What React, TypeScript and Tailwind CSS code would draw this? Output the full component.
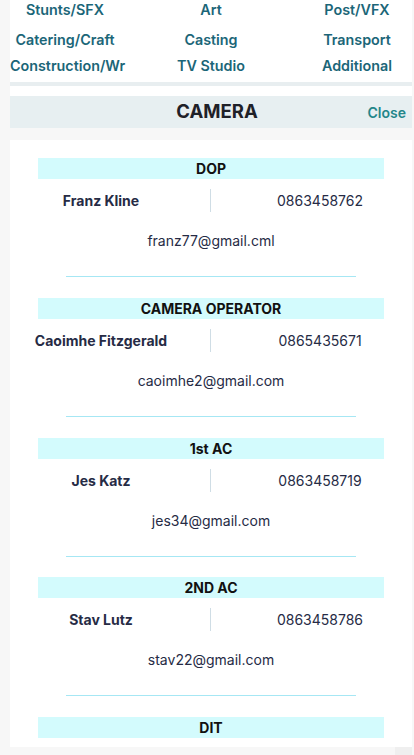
import React from "react";

const nav = [
  ["Stunts/SFX", "Art", "Post/VFX"],
  ["Catering/Craft", "Casting", "Transport"],
  ["Construction/Wr", "TV Studio", "Additional"],
];

const crew = [
  { role: "DOP", name: "Franz Kline", phone: "0863458762", email: "franz77@gmail.cml" },
  { role: "CAMERA OPERATOR", name: "Caoimhe Fitzgerald", phone: "0865435671", email: "caoimhe2@gmail.com" },
  { role: "1st AC", name: "Jes Katz", phone: "0863458719", email: "jes34@gmail.com" },
  { role: "2ND AC", name: "Stav Lutz", phone: "0863458786", email: "stav22@gmail.com" },
  { role: "DIT", name: "", phone: "", email: "" },
];

export default function App() {
  return (
    <div
      className="h-[755px] w-[414px] overflow-hidden bg-[#f7f7f7] pl-[10px] pr-[2px]"
      style={{ fontFamily: "Inter, 'Noto Sans', sans-serif" }}
    >
      {/* nav panel */}
      <div className="bg-white">
        <div className="border-b-4 border-[#e8eef0] pb-[7px]">
          {nav.map((row, i) => (
            <div
              key={i}
              className={`grid grid-cols-[110px_182px_110px] text-[14.3px] font-semibold leading-[18px] text-[#1b6678] ${
                i === 0 ? "pt-[1px]" : i === 1 ? "mt-[12px]" : "mt-[8px]"
              }`}
            >
              {row.map((t) => (
                <div key={t} className="whitespace-nowrap text-center">
                  {t}
                </div>
              ))}
            </div>
          ))}
        </div>
        <div className="h-[10px]" />
      </div>

      {/* header */}
      <div className="relative flex h-[32px] items-center justify-center bg-[#e7eff1]">
        <div className="ml-[12px] text-[18.5px] font-bold text-[#1f2128]">CAMERA</div>
        <div className="absolute right-[6px] top-1/2 -translate-y-1/2 text-[14px] font-semibold text-[#23868a]">
          Close
        </div>
      </div>

      <div className="h-[12px]" />

      {/* crew list */}
      <div className="h-[607px] bg-white px-[28px] pt-[18px]">
        {crew.map((c) => (
          <div key={c.role}>
            <div className="flex h-[21px] items-center justify-center bg-[#d3fbfd] text-[14px] font-bold text-[#111]">
              {c.role}
            </div>
            {c.name && (
              <>
                <div className="mt-[10px] flex h-[23px] items-center justify-between">
                  <div className="flex w-[126px] justify-center">
                    <span className="whitespace-nowrap text-[14px] font-bold text-[#262b45]">{c.name}</span>
                  </div>
                  <div className="h-[23px] w-px bg-[#cfdde5]" />
                  <div className="w-[128px] text-center text-[14px] text-[#262b45]">{c.phone}</div>
                </div>
                <div className="mt-[20px] text-center text-[14px] leading-[18px] text-[#262b45]">{c.email}</div>
                <div className="mx-[28px] mt-[26px] h-px bg-[#a6e7f4]" />
                <div className="h-[20.75px]" />
              </>
            )}
          </div>
        ))}
      </div>
      <div className="flex justify-end">
        <div className="h-[8px] w-[17px] bg-[#efefef]" />
      </div>
    </div>
  );
}
